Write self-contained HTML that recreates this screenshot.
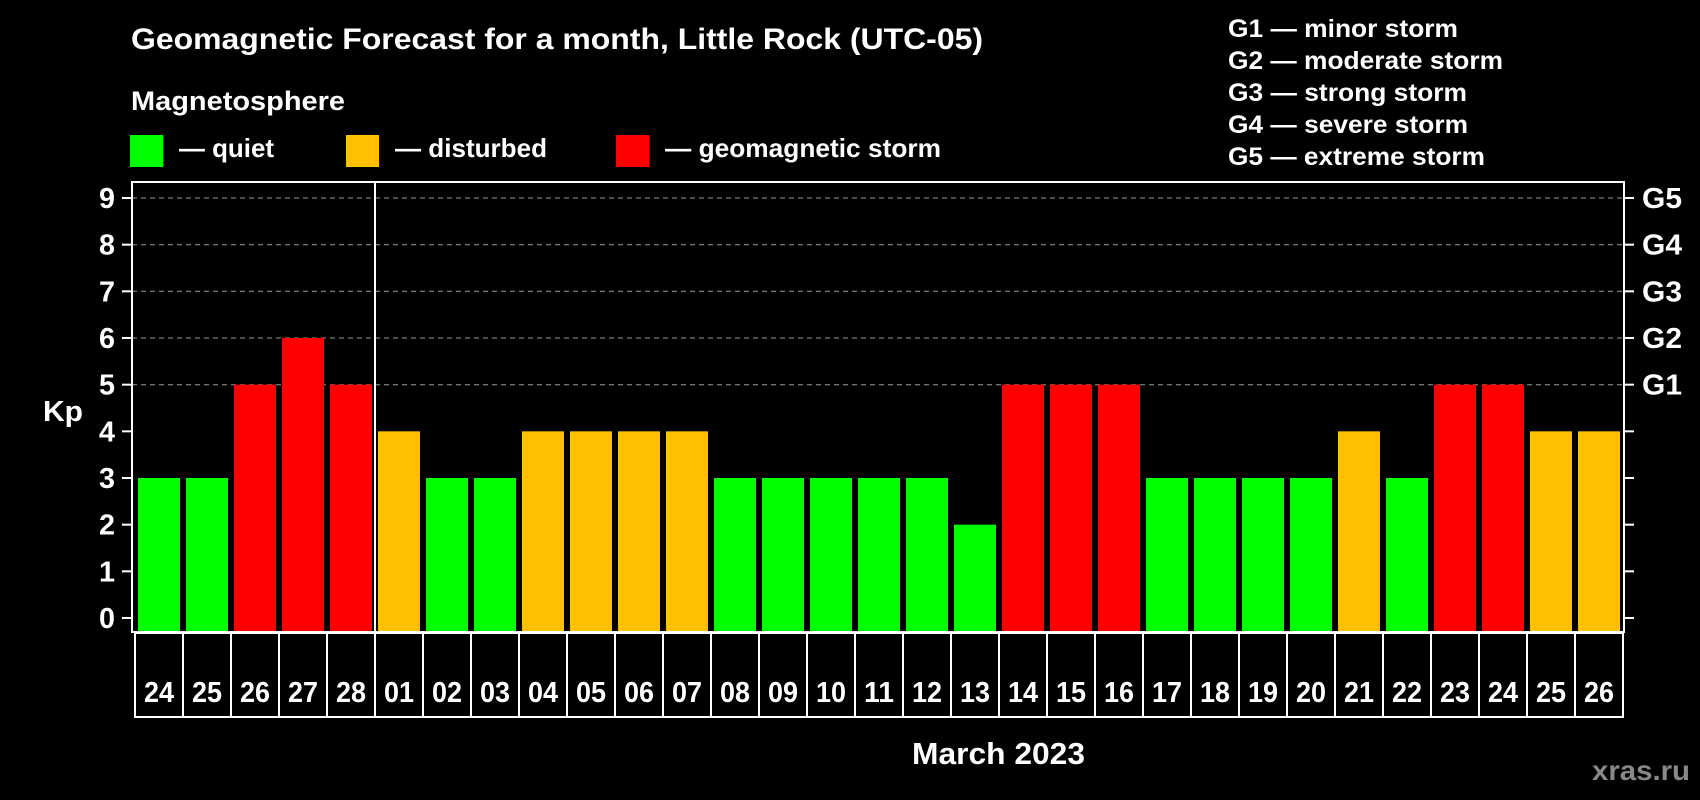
<!DOCTYPE html>
<html><head><meta charset="utf-8"><style>
html,body{margin:0;padding:0;background:#000;}
svg{display:block;font-family:"Liberation Sans",Arial,sans-serif;font-weight:bold;}
</style></head><body>
<svg width="1700" height="800" viewBox="0 0 1700 800" xmlns="http://www.w3.org/2000/svg">
<rect width="1700" height="800" fill="#000"/>
<text x="131" y="49" fill="#fff" font-size="30" textLength="852" lengthAdjust="spacingAndGlyphs">Geomagnetic Forecast for a month, Little Rock (UTC-05)</text>
<text x="131" y="110" fill="#fff" font-size="27" textLength="214" lengthAdjust="spacingAndGlyphs">Magnetosphere</text>
<rect x="130" y="135" width="33" height="32" fill="#00ff00"/>
<text x="179" y="157" fill="#fff" font-size="26" textLength="95" lengthAdjust="spacingAndGlyphs">— quiet</text>
<rect x="346" y="135" width="33" height="32" fill="#ffc000"/>
<text x="395" y="157" fill="#fff" font-size="26" textLength="152" lengthAdjust="spacingAndGlyphs">— disturbed</text>
<rect x="616" y="135" width="33" height="32" fill="#ff0000"/>
<text x="665" y="157" fill="#fff" font-size="26" textLength="276" lengthAdjust="spacingAndGlyphs">— geomagnetic storm</text>
<g fill="#fff" font-size="25">
<text x="1228" y="37" textLength="230" lengthAdjust="spacingAndGlyphs">G1 — minor storm</text>
<text x="1228" y="69" textLength="275" lengthAdjust="spacingAndGlyphs">G2 — moderate storm</text>
<text x="1228" y="101" textLength="239" lengthAdjust="spacingAndGlyphs">G3 — strong storm</text>
<text x="1228" y="133" textLength="240" lengthAdjust="spacingAndGlyphs">G4 — severe storm</text>
<text x="1228" y="165" textLength="257" lengthAdjust="spacingAndGlyphs">G5 — extreme storm</text>
</g>
<g stroke="#999" stroke-width="1" stroke-dasharray="5,4">
<line x1="132" x2="1624" y1="198" y2="198"/>
<line x1="132" x2="1624" y1="244.7" y2="244.7"/>
<line x1="132" x2="1624" y1="291.3" y2="291.3"/>
<line x1="132" x2="1624" y1="338" y2="338"/>
<line x1="132" x2="1624" y1="384.7" y2="384.7"/>
</g>
<g id="bars"></g>
<rect x="132" y="182" width="1492" height="450" fill="none" stroke="#fff" stroke-width="2"/>
<line x1="375" x2="375" y1="182" y2="632" stroke="#fff" stroke-width="2"/>
<g id="ticks" stroke="#fff" stroke-width="2"></g>
<g id="ylab" fill="#fff" font-size="29"></g>
<g fill="#fff" font-size="29">
<text x="1642" y="208" textLength="40" lengthAdjust="spacingAndGlyphs">G5</text>
<text x="1642" y="254.7" textLength="40" lengthAdjust="spacingAndGlyphs">G4</text>
<text x="1642" y="301.3" textLength="40" lengthAdjust="spacingAndGlyphs">G3</text>
<text x="1642" y="348" textLength="40" lengthAdjust="spacingAndGlyphs">G2</text>
<text x="1642" y="394.7" textLength="40" lengthAdjust="spacingAndGlyphs">G1</text>
</g>
<text x="43" y="421" fill="#fff" font-size="29" textLength="40" lengthAdjust="spacingAndGlyphs">Kp</text>
<g id="dates"></g>
<text x="912" y="764" fill="#fff" font-size="31" textLength="173" lengthAdjust="spacingAndGlyphs">March 2023</text>
<text x="1592" y="780" fill="#888" font-size="28" textLength="98" lengthAdjust="spacingAndGlyphs">xras.ru</text>
</svg>
<script>
var v=[3,3,5,6,5,4,3,3,4,4,4,4,3,3,3,3,3,2,5,5,5,3,3,3,3,4,3,5,5,4,4];
var d=["24","25","26","27","28","01","02","03","04","05","06","07","08","09","10","11","12","13","14","15","16","17","18","19","20","21","22","23","24","25","26"];
var ns="http://www.w3.org/2000/svg";
function el(p,t,a,txt){var e=document.createElementNS(ns,t);for(var k in a)e.setAttribute(k,a[k]);if(txt)e.textContent=txt;document.getElementById(p).appendChild(e);}
for(var i=0;i<31;i++){var x=138+i*48,y=618-46.667*v[i];var c=v[i]>=5?"#ff0000":v[i]==4?"#ffc000":"#00ff00";
el("bars","rect",{x:x,y:y,width:42,height:632-y,fill:c});
el("dates","rect",{x:135+i*48,y:633,width:48,height:84,fill:"none",stroke:"#fff","stroke-width":2});
el("dates","text",{x:144+i*48,y:702,fill:"#fff","font-size":29,textLength:30,lengthAdjust:"spacingAndGlyphs"},d[i]);}
for(var k=0;k<=9;k++){var y=618-46.667*k;
el("ticks","line",{x1:122,x2:131,y1:y,y2:y});el("ticks","line",{x1:1625,x2:1634,y1:y,y2:y});
el("ylab","text",{x:99,y:y+10,textLength:16,lengthAdjust:"spacingAndGlyphs"},String(k));}
</script>
</body></html>
